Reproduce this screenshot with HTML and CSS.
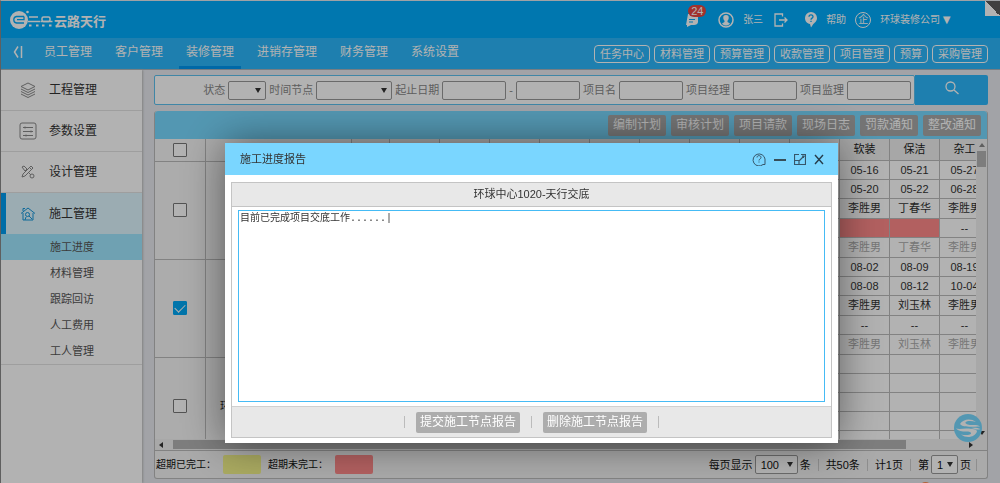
FILE: index.html
```html
<!DOCTYPE html>
<html lang="zh-CN">
<head>
<meta charset="utf-8">
<title>云路天行</title>
<link rel="stylesheet" href="styles.css">
</head>
<body>
<div class="app">
  <header class="top">
    <div class="brand">
      <svg class="brand-mark" viewBox="0 0 44 20" width="44" height="20" fill="none" stroke="#fff">
        <circle cx="9" cy="10" r="9" fill="#fff" stroke="none"/>
        <path d="M14 6.500H6.500a3.300 3.300 0 0 0 0 6.500H14M14 6.500v3.200H7" stroke="#00abfb" stroke-width="1.300"/>
        <circle cx="17.500" cy="2" r="1.300" fill="#fff" stroke="none"/>
        <path d="M19 7h9M18 11.500h12M30.500 11.500h12" stroke-width="1.500"/>
        <rect x="32" y="7" width="8" height="4.500" rx="1.500" stroke-width="1.500"/>
        <path d="M19 15.500h2.500M26 15.500h2.500M32 15.500h2.500M39 15.500h2.500" stroke-width="2"/>
      </svg>
      <span class="brand-name">云路天行</span>
    </div>
    <div class="account">
      <a class="msg" href="#" aria-label="消息">
        <svg viewBox="0 0 14 14" width="14" height="14"><path d="M3 1h10v8c0 2-2 3-4 3H6l-4 2V12H1z" fill="#fff"/><path d="M4 6.500h6M4 9h4" stroke="#00abfb"/></svg>
        <span class="badge">24</span>
      </a>
      <a class="user" href="#">
        <svg viewBox="0 0 16 16" width="16" height="16"><circle cx="8" cy="8" r="7" fill="none" stroke="#fff" stroke-width="1.500"/><path d="M8 3c-2 0-3 1.200-2.700 3.200.1 1.300.7 2 1.200 2.500v1.200L4 11.500C5 13 6.500 13.500 8 13.500s3-.5 4-2L9.500 9.900V8.700c.5-.5 1.100-1.200 1.200-2.500C11 4.200 10 3 8 3z" fill="#fff"/></svg>
        <span>张三</span>
      </a>
      <a class="logout" href="#" aria-label="退出">
        <svg viewBox="0 0 14 14" width="14" height="14" fill="none" stroke="#fff" stroke-width="1.300"><path d="M8.500 3.500V1H1v12h7.500v-2.500M5 7h8M10.500 4.500L13 7l-2.500 2.500"/></svg>
      </a>
      <a class="help" href="#">
        <svg viewBox="0 0 12 16" width="12" height="16"><path d="M6 0a6 6 0 0 1 6 6c0 3.500-2.500 4.700-4 6.500L6 15.500 5 12C2 11.700 0 9 0 6a6 6 0 0 1 6-6z" fill="#fff"/><path d="M4 4.700C4 2.200 8 2.200 8 4.700 8 6.200 6 6 6 7.700M6 8.700v1.300" fill="none" stroke="#00abfb" stroke-width="1.300"/></svg>
        <span>帮助</span>
      </a>
      <a class="company" href="#">
        <span class="ring">企</span>
        <span class="firm">环球装修公司<span class="caret">▼</span></span>
      </a>
    </div>
    <span class="corner"></span>
  </header>

  <nav class="nav">
    <button class="fold" aria-label="收起菜单"><svg viewBox="0 0 10 12" width="10" height="12" fill="none" stroke="#fff" stroke-width="1.500"><path d="M5 0.500L1.500 6 5 11.500M8.500 0v12"/></svg></button>
    <div class="menu">
      <a href="#">员工管理</a><a href="#">客户管理</a><a class="on" href="#">装修管理</a><a href="#">进销存管理</a><a href="#">财务管理</a><a href="#">系统设置</a>
    </div>
    <div class="shortcuts">
      <button>任务中心</button><button>材料管理</button><button>预算管理</button><button>收款管理</button><button>项目管理</button><button>预算</button><button>采购管理</button>
    </div>
  </nav>

  <div class="body">
    <aside class="side">
      <a class="group" href="#"><svg viewBox="0 0 16 16" width="16" height="16" fill="none" stroke="#888"><path d="M8 1L15 4.500 8 8 1 4.500zM1 7l7 3.500L15 7M1 9.500L8 13l7-3.500M1 12l7 3.500 7-3.500"/></svg><span>工程管理</span></a>
      <a class="group" href="#"><svg viewBox="0 0 18 18" width="18" height="18" fill="none" stroke="#888"><rect x="1" y="1" width="16" height="16" rx="2"/><path d="M4 5.500h10M4 9.500h10M4 13.500h10M6 4.500v2M12 8.500v2M7 12.500v2"/></svg><span>参数设置</span></a>
      <a class="group" href="#"><svg viewBox="0 0 16 16" width="16" height="16" fill="none" stroke="#888"><path d="M2 13l1-3 8-8 2 2-8 8zM2 3l2-1 3 3-2 2zM9 9l2 2M9.500 3.500l2 2"/><circle cx="12" cy="12" r="2"/></svg><span>设计管理</span></a>
      <a class="group on" href="#"><svg viewBox="0 0 16 16" width="16" height="16" fill="none" stroke="#1597dc"><path d="M1 7.500L8 2l7 5.500M3 7v7h10V7M3 5V2.500h2"/><circle cx="7.500" cy="8.500" r="2"/><path d="M9 10l3 3M6 11l-1 3"/></svg><span>施工管理</span></a>
      <div class="sub">
        <a class="on" href="#">施工进度</a><a href="#">材料管理</a><a href="#">跟踪回访</a><a href="#">人工费用</a><a href="#">工人管理</a>
      </div>
    </aside>

    <main class="main">
      <form class="search">
        <div class="fields">
          <label for="state">状态</label><span class="sel s1"><select id="state"><option></option></select></span>
          <label for="node">时间节点</label><span class="sel s2"><select id="node"><option></option></select></span>
          <label for="from">起止日期</label><input id="from" type="text"><span class="dash">-</span><input type="text" aria-label="结束日期">
          <label for="pname">项目名</label><input id="pname" type="text">
          <label for="pm">项目经理</label><input id="pm" type="text">
          <label for="sup">项目监理</label><input id="sup" type="text">
        </div>
        <button class="go" type="button" aria-label="搜索"><svg viewBox="0 0 14 14" width="14" height="14" fill="none" stroke="#fff" stroke-width="1.300"><circle cx="5.500" cy="5.500" r="4.500"/><path d="M9 9l4.500 4"/></svg></button>
      </form>

      <section class="panel">
        <div class="tools">
          <button>编制计划</button><button>审核计划</button><button>项目请款</button><button>现场日志</button><button>罚款通知</button><button>整改通知</button>
        </div>
        <div class="grid">
          <div class="sheet">
            <table class="frozen">
              <colgroup><col class="c-check"><col class="c-name"></colgroup>
              <thead><tr><th><input type="checkbox" aria-label="全选"></th><th></th></tr></thead>
              <tbody>
                <tr><td><input type="checkbox" aria-label="选择第1行"></td><td></td></tr>
                <tr><td><input type="checkbox" aria-label="选择第2行" checked></td><td></td></tr>
                <tr><td><input type="checkbox" aria-label="选择第3行"></td><td>环球中心1020-天行交底</td></tr>
              </tbody>
            </table>
            <table class="plan">
              <colgroup><col class="c-kind"><col span="12" class="c-day"></colgroup>
              <thead><tr><th></th><th></th><th></th><th></th><th></th><th></th><th></th><th></th><th></th><th></th><th>软装</th><th>保洁</th><th>杂工</th></tr></thead>
              <tbody>
                <tr><td colspan="10"></td><td>05-16</td><td>05-21</td><td>05-27</td></tr>
                <tr><td colspan="10"></td><td>05-20</td><td>05-22</td><td>06-28</td></tr>
                <tr class="who"><td colspan="10"></td><td>李胜男</td><td>丁春华</td><td>李胜男</td></tr>
                <tr><td colspan="10"></td><td class="late"></td><td class="late"></td><td>--</td></tr>
                <tr class="who faint"><td colspan="10"></td><td>李胜男</td><td>丁春华</td><td>李胜男</td></tr>
                <tr><td colspan="10"></td><td>08-02</td><td>08-09</td><td>08-19</td></tr>
                <tr><td colspan="10"></td><td>08-08</td><td>08-12</td><td>10-04</td></tr>
                <tr class="who"><td colspan="10"></td><td>李胜男</td><td>刘玉林</td><td>李胜男</td></tr>
                <tr><td colspan="10"></td><td>--</td><td>--</td><td>--</td></tr>
                <tr class="who faint"><td colspan="10"></td><td>李胜男</td><td>刘玉林</td><td>李胜男</td></tr>
                <tr><td colspan="10"></td><td></td><td></td><td></td></tr>
                <tr><td colspan="10"></td><td></td><td></td><td></td></tr>
                <tr><td colspan="10"></td><td></td><td></td><td></td></tr>
                <tr><td colspan="10"></td><td></td><td></td><td></td></tr>
                <tr><td colspan="10"></td><td></td><td></td><td></td></tr>
              </tbody>
            </table>
          </div>
          <div class="vbar"><i class="up"></i><i class="thumb"></i><i class="down"></i></div>
        </div>
        <div class="hbar"><i class="left"></i><i class="thumb"></i><i class="right"></i></div>
        <footer class="foot">
          <span class="legend">超期已完工：</span><i class="chip yellow"></i>
          <span class="legend">超期未完工：</span><i class="chip red"></i>
          <div class="pager">
            <label for="size">每页显示</label><span class="sel s3"><select id="size"><option>100</option></select></span><span>条</span>
            <i class="bar"></i><span>共50条</span><i class="bar"></i><span>计1页</span><i class="bar"></i>
            <label for="page">第</label><span class="sel s4"><select id="page"><option>1</option></select></span><span>页</span><i class="bar"></i>
          </div>
        </footer>
      </section>
    </main>
  </div>

  <svg class="float" viewBox="0 0 28 28" width="28" height="28"><circle cx="14" cy="14" r="14" fill="#78d9ff"/><path d="M6 10C9 5 17 4 22 8c-4-1.500-9-1.500-10.500.3C11 10 14 11 17 11c4 0 7-.3 9 1.700-3-.4-6 .3-9 .1-5-.3-9-.3-11-2.800z" fill="#fff"/><path d="M2 14.500c4 1 7-.2 11 0 5 .2 10 .6 10 3C21 23 13 25 7 20.500c4 1 9 .8 10-.8.6-1.600-2-2.200-5-2.200-4 0-8-.5-10-3zM17 14c3-.6 6-.6 9.500 1-2 1-4 .6-5.500 0z" fill="#fff"/></svg>
  <span class="spot"></span>
</div>

<div class="shade"></div>

<section class="dialog" role="dialog" aria-labelledby="dlg-title">
  <header class="dlg-head">
    <h2 id="dlg-title">施工进度报告</h2>
    <button aria-label="帮助"><svg viewBox="0 0 14 14" width="14" height="14" fill="none" stroke="#36566a"><path d="M11 12.500A6 6 0 1 1 13 7v5.500z"/><path d="M5 5.500C5 3 9 3 9 5.500 9 7 7 7 7 8.500M7 9.500v1"/></svg></button>
    <button aria-label="最小化"><svg viewBox="0 0 12 14" width="12" height="14"><path d="M0 8h12" stroke="#222" stroke-width="1.500"/></svg></button>
    <button aria-label="最大化"><svg viewBox="0 0 12 14" width="12" height="14" fill="none" stroke="#36566a"><path d="M5 2.500H.5v10h11v-10H7M8 4h2v2M10 4L5.500 8.500M.5 8.500h4.500v4" stroke-width="1.200"/></svg></button>
    <button aria-label="关闭"><svg viewBox="0 0 10 14" width="10" height="14" stroke="#263c4a" stroke-width="1.400"><path d="M1 3l8 9M9 3l-8 9"/></svg></button>
  </header>
  <div class="dlg-body">
    <h3>环球中心1020-天行交底</h3>
    <div class="report"><textarea aria-label="施工进度报告">目前已完成项目交底工作......|</textarea></div>
    <div class="actions">
      <i class="bar"></i><button>提交施工节点报告</button><i class="bar"></i><button>删除施工节点报告</button><i class="bar"></i>
    </div>
  </div>
</section>
</body>
</html>
```
FILE: styles.css
```css
* { box-sizing: border-box; }
body {
  margin: 0;
  font: 11px/16px "Liberation Sans", "Noto Sans CJK SC", sans-serif;
  color: #333;
  background: #e8eaf0;
}
a { color: inherit; text-decoration: none; }
button, input, select, textarea { font: inherit; color: inherit; margin: 0; }
button { border: 0; padding: 0; background: none; cursor: pointer; }
svg { display: block; flex: none; }
i { display: block; font-style: normal; flex: none; }

.app {
  position: relative;
  display: flex;
  flex-direction: column;
  height: 100vh;
  overflow: hidden;
  border-top: 1px solid #e4e8ec;
  border-left: 1px solid #888;
}

/* top bar */
.top {
  position: relative;
  display: flex;
  align-items: center;
  justify-content: space-between;
  height: 37px;
  flex: none;
  padding: 0 47px 0 9px;
  background: #00abfb;
  color: #fff;
  font-size: 10px;
}
.brand { display: flex; align-items: flex-end; }
.brand-name { font-size: 13px; font-weight: bold; }
.account { display: flex; align-items: center; }
.account a { display: flex; align-items: center; gap: 9px; }
.account .msg { position: relative; margin-right: 19px; }
.badge {
  position: absolute;
  left: 3px;
  top: -8px;
  padding: 0 3px;
  border-radius: 6px;
  background: #e8473f;
  font-size: 11px;
  line-height: 12px;
}
.user { margin-right: 11px; }
.logout { margin-right: 17px; }
.help { margin-right: 9px; }
.ring {
  width: 16px;
  height: 16px;
  border: 1px solid #fff;
  border-radius: 50%;
  line-height: 14px;
  text-align: center;
}
.firm { display: flex; align-items: center; }
.caret { font-size: 13px; }
.corner {
  position: absolute;
  top: 0;
  right: 0;
  width: 15px;
  height: 15px;
  background: linear-gradient(45deg, #fff 50%, #5c5c5c 50%);
}

/* main navigation */
.nav {
  display: flex;
  align-items: stretch;
  height: 31px;
  flex: none;
  padding: 0 12px;
  background: #2bb7fb;
  color: #fff;
}
.fold { width: 10px; margin-right: 14px; padding-bottom: 3px; }
.menu { display: flex; font-size: 12px; line-height: 28px; }
.menu a { padding: 0 7px; margin-right: 9px; border-bottom: 3px solid transparent; }
.menu .on { border-color: #0096f0; }
.shortcuts { display: flex; align-items: center; gap: 4px; margin-left: auto; }
.shortcuts button {
  height: 18px;
  padding: 0 5px;
  border: 1px solid #fff;
  border-radius: 4px;
  line-height: 14px;
}

.body { display: flex; flex: 1; min-height: 0; border-top: 1px solid #a9b4bc; }

/* sidebar */
.side {
  width: 141px;
  flex: none;
  background: #fff;
  box-shadow: 1px 0 2px #bbb;
}
.group {
  display: flex;
  align-items: center;
  height: 41px;
  padding-left: 18px;
  border-bottom: 1px solid #e2e2e2;
  font-size: 12px;
}
.group svg { width: 18px; }
.group span { margin-left: 12px; }
.group.on {
  padding-left: 13px;
  border-left: 5px solid #009cf0;
  border-bottom: 0;
  background: #dff6ff;
}
.sub { border-bottom: 1px solid #e2e2e2; }
.sub a { display: block; height: 26px; padding-left: 49px; line-height: 26px; color: #555; }
.sub .on { background: #a0e7ff; }

/* search bar */
.main {
  display: flex;
  flex-direction: column;
  flex: 1;
  min-width: 0;
  padding: 5px 12px 4px;
}
.search { display: flex; height: 30px; flex: none; margin-bottom: 6px; }
.fields {
  display: flex;
  align-items: center;
  justify-content: flex-end;
  gap: 3px;
  flex: 1;
  padding-right: 3px;
  border: 1px solid #5cc0ee;
  border-radius: 2px;
  background: #fff;
  color: #888;
  white-space: nowrap;
}
.fields input {
  width: 64px;
  height: 19px;
  border: 1px solid #999;
  border-radius: 2px;
  background: #fff;
}
.sel { position: relative; display: block; height: 19px; }
.sel select {
  display: block;
  width: 100%;
  height: 100%;
  padding: 0 5px;
  appearance: none;
  border: 1px solid #999;
  border-radius: 2px;
  background: #fff;
}
.sel::after {
  content: "";
  position: absolute;
  right: 5px;
  top: 7px;
  border: 3px solid transparent;
  border-top: 5px solid #333;
  border-bottom: 0;
  pointer-events: none;
}
.s1 { width: 38px; }
.s2 { width: 76px; }
.s3 { width: 43px; }
.s4 { width: 27px; }
.go {
  display: flex;
  justify-content: center;
  width: 73px;
  padding-top: 6px;
  border-radius: 0 2px 2px 0;
  background: #2bb7fb;
}

/* schedule */
.panel {
  display: flex;
  flex-direction: column;
  flex: 1;
  min-height: 0;
  border: 1px solid #bbb;
  border-top: 0;
  border-radius: 3px;
  background: #f4f4f4;
}
.tools {
  display: flex;
  align-items: center;
  justify-content: flex-end;
  gap: 5px;
  height: 28px;
  flex: none;
  padding-right: 6px;
  border-radius: 3px 3px 0 0;
  background: #78d9ff;
}
.tools button {
  width: 58px;
  height: 21px;
  border-radius: 2px;
  background: #a8a8a8;
  color: #fff;
  font-size: 12px;
  line-height: 20px;
}
.grid { display: flex; flex: 1; min-height: 0; overflow: hidden; }
.sheet { display: flex; align-items: flex-start; flex: 1; min-width: 0; overflow: hidden; background: #fff; }
table { flex: none; table-layout: fixed; border-collapse: collapse; }
th, td {
  padding: 0;
  border: 1px solid #bbb;
  border-top: 0;
  border-left: 0;
  text-align: center;
  vertical-align: middle;
  white-space: nowrap;
}
th { height: 22px; background: #f0f0f0; font-weight: normal; color: #222; }
.frozen { width: 196px; }
.frozen td { height: 98px; }
.frozen td, .frozen th { background: #f6f6f6; }
.c-check { width: 50px; }
.c-name { width: 146px; }
.plan { width: 638px; }
.c-kind { width: 38px; }
.c-day { width: 50px; }
.plan th { height: 21px; }
.plan td { height: 19px; line-height: 18px; }
.plan .who td { height: 20px; }
.plan .faint td { color: #aaa; }
.plan .late { background: #ff8a8a; }
input[type="checkbox"] {
  display: block;
  width: 14px;
  height: 14px;
  margin: 0 auto;
  appearance: none;
  border: 1px solid #777;
  border-radius: 1px;
  background: #fff;
}
input[type="checkbox"]:checked { border-color: #00a8f5; background: #00a8f5; }
input[type="checkbox"]:checked::after {
  content: "";
  display: block;
  width: 9px;
  height: 5px;
  margin: 2px auto;
  border: solid #fff;
  border-width: 0 0 1px 1px;
  transform: rotate(-45deg);
}
.vbar { display: flex; flex-direction: column; align-items: center; width: 11px; flex: none; padding: 4px 0; background: #f1f1f1; }
.vbar .thumb { width: 9px; height: 16px; margin-top: 4px; background: #b4b4b4; }
.up, .down { border: 3px solid transparent; }
.up { border-top: 0; border-bottom: 4px solid #888; }
.down { border-bottom: 0; border-top: 4px solid #333; margin-top: auto; }
.hbar { display: flex; align-items: center; height: 11px; flex: none; padding: 0 14px 0 4px; background: #f1f1f1; }
.hbar .thumb { width: 90%; height: 9px; margin-left: 10px; background: #b4b4b4; }
.left, .right { border: 3px solid transparent; }
.left { border-left: 0; border-right: 4px solid #333; }
.right { border-right: 0; border-left: 4px solid #333; margin-left: auto; }

.foot {
  display: flex;
  align-items: center;
  height: 28px;
  flex: none;
  padding: 0 10px 0 1px;
  border-top: 1px solid #bbb;
  color: #111;
}
.legend { width: 67px; font-size: 10px; }
.chip { width: 38px; height: 19px; margin-right: 7px; border-radius: 2px; }
.yellow { background: #f3f38b; }
.red { background: #ff8a8a; }
.pager { display: flex; align-items: center; gap: 2px; margin-left: auto; white-space: nowrap; }
.bar { width: 1px; height: 12px; margin: 0 6px; background: #ccc; }
.pager .bar { margin: 0 5px; }
.pager .bar:last-child { margin: 0 0 0 3px; }

.float { position: absolute; right: 18px; bottom: 41px; }
.spot { position: absolute; right: 68px; bottom: -12px; width: 13px; height: 13px; border-radius: 50%; background: #ff8a50; }

.shade { position: fixed; inset: 0; background: rgba(0, 0, 0, 0.3); }

/* report dialog */
.dialog {
  position: fixed;
  top: 143px;
  left: 225px;
  right: 162px;
  background: #fff;
  box-shadow: 0 0 40px rgba(0, 0, 0, 0.5);
}
.dlg-head {
  display: flex;
  align-items: center;
  gap: 8px;
  height: 32px;
  padding: 0 14px 0 15px;
  background: #7ad6ff;
}
.dlg-head h2 { flex: 1; margin: 0; font-size: 11px; font-weight: normal; }
.dlg-body { margin: 7px 6px 5px; border: 1px solid #c4c4c4; background: #e8e8e8; }
.dlg-body h3 { margin: 0; font-size: 11px; font-weight: normal; line-height: 23px; text-align: center; border-bottom: 1px solid #c4c4c4; }
.report { padding: 3px 6px 4px; background: #fff; border-bottom: 1px solid #d0d0d0; }
.report textarea {
  display: block;
  width: 100%;
  height: 192px;
  padding: 0 1px;
  border: 1px solid #45bbf5;
  outline: 0;
  resize: none;
  font-family: "Liberation Mono", "Noto Sans CJK SC", monospace;
  font-size: 10px;
}
.actions { display: flex; align-items: center; justify-content: center; gap: 5px; height: 30px; }
.actions .bar { background: #bbb; }
.actions button {
  width: 104px;
  height: 21px;
  border-radius: 2px;
  background: #adadad;
  color: #fff;
  font-size: 12px;
}
```
